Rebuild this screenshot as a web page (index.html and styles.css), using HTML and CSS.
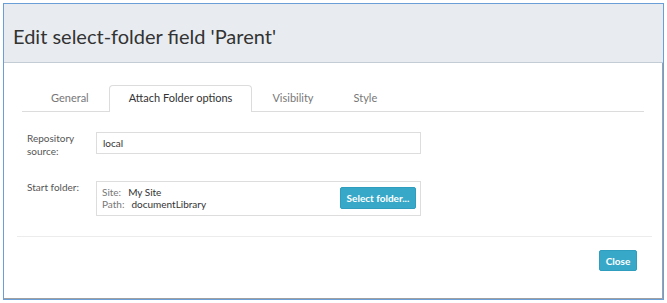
FILE: index.html
```html
<!DOCTYPE html>
<html>
<head>
<meta charset="utf-8">
<link rel="stylesheet" href="styles.css">
</head>
<body>
<div class="frame">
  <div class="header">
    <h1 class="title">Edit select-folder field 'Parent'</h1>
  </div>
  <div class="content">
    <ul class="tabs">
      <li class="tab">General</li>
      <li class="tab active">Attach Folder options</li>
      <li class="tab">Visibility</li>
      <li class="tab">Style</li>
    </ul>
    <div class="form">
      <div class="row">
        <div class="label">Repository<br>source:</div>
        <div class="input">local</div>
      </div>
      <div class="row row-folder">
        <div class="label">Start folder:</div>
        <div class="folder-box">
          <div class="folder-info">
            <div class="line"><span class="key">Site:</span><span class="val">My Site</span></div>
            <div class="line"><span class="key">Path:</span><span class="val">documentLibrary</span></div>
          </div>
          <button class="btn btn-select">Select folder...</button>
        </div>
      </div>
    </div>
  </div>
  <div class="footer">
    <button class="btn btn-close">Close</button>
  </div>
</div>
</body>
</html>
```

FILE: styles.css
```css
html, body {
  margin: 0;
  padding: 0;
  background: #ffffff;
}
body {
  font-family: Lato, "Open Sans", "Liberation Sans", sans-serif;
  color: #333;
}
.frame {
  margin: 3px;
  height: 295px;
  border: 1px solid #6a9ed6;
  box-shadow: inset -1px -1px 0 #a0a0a0;
  display: flex;
  flex-direction: column;
  box-sizing: content-box;
}
.header {
  height: 59px;
  background: #e8ecf0;
  border-bottom: 1px solid #c3cbd4;
  padding: 6px 0 0 9px;
  box-sizing: border-box;
}
.title {
  margin: 0;
  font-size: 20px;
  font-weight: 400;
  line-height: 53px;
  height: 53px;
  color: #333;
}
.content {
  padding: 22px 19px 0 18px;
}
.tabs {
  list-style: none;
  margin: 0;
  padding: 0 0 0 9px;
  display: flex;
  border-bottom: 1px solid #dcdcdc;
  height: 26px;
}
.tab {
  font-size: 11px;
  color: #777;
  padding: 0 19px 2px;
  line-height: 24px;
  height: 24px;
  border: 1px solid transparent;
  border-bottom: none;
  border-radius: 4px 4px 0 0;
  margin-bottom: -1px;
  background: transparent;
}
.tab.active {
  color: #333;
  border-color: #dcdcdc;
  background: #ffffff;
}
.form {
  padding: 20px 0 0 5px;
}
.row {
  display: flex;
  align-items: flex-start;
}
.row-folder {
  margin-top: 23px;
}
.label {
  width: 69px;
  font-size: 10px;
  line-height: 13px;
  color: #555;
}
.input {
  width: 325px;
  height: 22px;
  box-sizing: border-box;
  border: 1px solid #dddddd;
  padding: 0 6px;
  font-size: 10px;
  line-height: 20px;
  color: #333;
}
.folder-box {
  width: 325px;
  height: 35px;
  box-sizing: border-box;
  border: 1px solid #dddddd;
  padding: 0 4px 0 5px;
  display: flex;
  align-items: center;
  justify-content: space-between;
}
.folder-info {
  font-size: 10px;
  line-height: 12px;
  margin-top: -2px;
}
.key {
  color: #777;
}
.val {
  color: #333;
  margin-left: 7px;
}
.btn {
  font-family: Lato, "Open Sans", "Liberation Sans", sans-serif;
  background: #38a8c8;
  border: 1px solid #2f9dbd;
  border-radius: 2px;
  color: #ffffff;
  font-size: 10px;
  font-weight: 700;
  padding: 0;
  cursor: pointer;
}
.btn-select {
  width: 76px;
  height: 22px;
  margin-top: -2px;
}
.footer {
  margin: 20px 11px 0 13px;
  border-top: 1px solid #ececec;
  display: flex;
  justify-content: flex-end;
  padding: 13px 15px 0 0;
}
.btn-close {
  width: 38px;
  height: 21px;
}
```
